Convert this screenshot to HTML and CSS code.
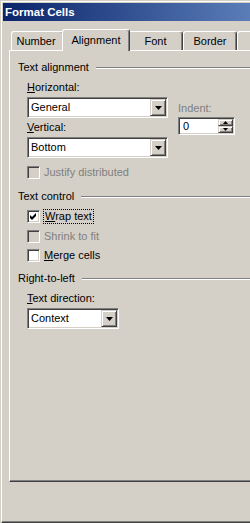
FILE: index.html
```html
<!DOCTYPE html>
<html lang="en">
<head>
    <meta charset="UTF-8">
    <meta name="viewport" content="width=device-width, initial-scale=1.0">
    <title>Format Cells</title>
    <link rel="stylesheet" href="styles.css">
</head>
<body>
<div class="window">
    <div class="caption">Format Cells</div>

    <div class="tabs">
        <div class="tab tab-number">Number</div>
        <div class="tab tab-alignment active">Alignment</div>
        <div class="tab tab-font">Font</div>
        <div class="tab tab-border">Border</div>
        <div class="tab tab-more"></div>
    </div>

    <div class="panel">
        <div class="group">
            <div class="group-title"><span>Text alignment</span><i class="rule"></i></div>
            <div class="group-body">
                <div class="align-row">
                    <div class="align-col">
                        <div class="label"><u>H</u>orizontal:</div>
                        <div class="combo combo-wide">
                            <span class="combo-text">General</span>
                            <span class="drop"><svg width="7" height="4" viewBox="0 0 7 4"><path d="M0 0h7L3.5 4z"/></svg></span>
                        </div>
                        <div class="label"><u>V</u>ertical:</div>
                        <div class="combo combo-wide">
                            <span class="combo-text">Bottom</span>
                            <span class="drop"><svg width="7" height="4" viewBox="0 0 7 4"><path d="M0 0h7L3.5 4z"/></svg></span>
                        </div>
                    </div>
                    <div class="indent-col">
                        <div class="label disabled">Indent:</div>
                        <div class="spinner">
                            <span class="spin-text">0</span>
                            <span class="spin-buttons">
                                <span class="spin-btn"><svg width="5" height="3" viewBox="0 0 5 3"><path d="M2.5 0L5 3H0z"/></svg></span>
                                <span class="spin-btn"><svg width="5" height="3" viewBox="0 0 5 3"><path d="M0 0h5L2.5 3z"/></svg></span>
                            </span>
                        </div>
                    </div>
                </div>
                <div class="check-row justify-row disabled">
                    <span class="checkbox"></span>
                    <span class="check-label">Justify distributed</span>
                </div>
            </div>
        </div>

        <div class="group group-control">
            <div class="group-title"><span>Text control</span><i class="rule"></i></div>
            <div class="group-body">
                <div class="check-row wrap-row">
                    <span class="checkbox checked"><svg width="7" height="7" viewBox="0 0 7 7"><path d="M0 2L2 4L6 0V3L2 7L0 5Z"/></svg></span>
                    <span class="check-label focus"><u>W</u>rap text</span>
                </div>
                <div class="check-row shrink-row disabled">
                    <span class="checkbox"></span>
                    <span class="check-label">Shrink to fit</span>
                </div>
                <div class="check-row merge-row">
                    <span class="checkbox"></span>
                    <span class="check-label"><u>M</u>erge cells</span>
                </div>
            </div>
        </div>

        <div class="group group-rtl">
            <div class="group-title"><span>Right-to-left</span><i class="rule"></i></div>
            <div class="group-body">
                <div class="label label-direction"><u>T</u>ext direction:</div>
                <div class="combo combo-small">
                    <span class="combo-text">Context</span>
                    <span class="drop"><svg width="7" height="4" viewBox="0 0 7 4"><path d="M0 0h7L3.5 4z"/></svg></span>
                </div>
            </div>
        </div>
    </div>
</div>
</body>
</html>
```

FILE: styles.css
```css
html, body {
    margin: 0;
    overflow: hidden;
}

body {
    width: 250px;
    height: 523px;
    background-color: #d4d0c8;
    font-family: "Liberation Sans", Arial, sans-serif;
    font-size: 11px;
    color: #000;
}

/* the dialog runs on past the right edge, so it has no right border here */
.window {
    box-sizing: border-box;
    width: 249px;
    height: 522px;
    margin: 1px 0 0 1px;
    padding: 1px 0 1px 1px;
    border-left: 1px solid #fff;
    border-top: 1px solid #fff;
    border-bottom: 1px solid #404040;
    box-shadow: inset 0 -1px #808080;
}

.caption {
    height: 18px;
    line-height: 18px;
    padding-left: 2px;
    background: linear-gradient(to right, #0a246a, #5a7db8);
    color: #fff;
    font-weight: bold;
    font-size: 11.5px;
}

/* tab strip */
.tabs {
    position: relative;
    z-index: 2;
    display: flex;
    align-items: flex-end;
    height: 22px;
    margin: 8px 0 -1px 8px;
}

.tab {
    box-sizing: border-box;
    position: relative;
    flex-shrink: 0;
    height: 19px;
    margin-bottom: 1px;
    line-height: 18px;
    text-align: center;
    background-color: #d4d0c8;
    border-top: 1px solid #fff;
    border-left: 1px solid #fff;
    border-right: 1px solid #404040;
    border-radius: 3px 3px 0 0;
    box-shadow: inset -1px 0 #808080;
}

.tab-number { width: 53px; padding-right: 3px; }
.tab-font { width: 55px; }
.tab-border { width: 54px; }

.tab-more {
    flex: 1;
    flex-shrink: 1;
    border-right: none;
    border-top-right-radius: 0;
    box-shadow: none;
}

.tab.active {
    z-index: 3;
    width: 68px;
    height: 22px;
    margin: 0 -2px;
    line-height: 20px;
}

/* page */
.panel {
    box-sizing: border-box;
    position: relative;
    z-index: 1;
    height: 432px;
    margin-left: 6px;
    padding-top: 10px;
    border-top: 1px solid #fff;
    border-left: 1px solid #fff;
    border-bottom: 1px solid #404040;
    box-shadow: inset 0 -1px #808080;
}

.group {
    padding-left: 8px;
}

.group-control {
    margin-top: 11px;
}

.group-rtl {
    margin-top: 10px;
}

.group-title {
    display: flex;
    align-items: center;
    height: 13px;
    line-height: 13px;
    white-space: nowrap;
}

.rule {
    flex: 1;
    height: 0;
    margin-left: 7px;
    border-top: 1px solid #808080;
    border-bottom: 1px solid #fff;
}

.group-body {
    padding-left: 9px;
}

.label {
    height: 13px;
    line-height: 13px;
    white-space: nowrap;
}

.disabled,
.label.disabled {
    color: #808080;
}

.align-row {
    display: flex;
    margin-top: 7px;
}

.align-col {
    width: 141px;
}

.align-col .combo {
    margin: 3px 0;
}

.indent-col {
    margin-left: 10px;
    padding-top: 21px;
}

/* sunken field */
.combo,
.spinner,
.checkbox {
    box-sizing: border-box;
    background-color: #fff;
    border-top: 1px solid #808080;
    border-left: 1px solid #808080;
    border-right: 1px solid #fff;
    border-bottom: 1px solid #fff;
    box-shadow: inset 1px 1px #404040, inset -1px -1px #d4d0c8;
}

.combo {
    display: flex;
    height: 21px;
    padding: 1px;
}

.combo-wide { width: 141px; }

.combo-small {
    width: 92px;
    margin-top: 3px;
}

.combo-text {
    flex: 1;
    padding-left: 2px;
    line-height: 17px;
    white-space: nowrap;
}

.drop,
.spin-btn {
    box-sizing: border-box;
    display: flex;
    justify-content: center;
    align-items: center;
    background-color: #d4d0c8;
    border-top: 1px solid #d4d0c8;
    border-left: 1px solid #d4d0c8;
    border-right: 1px solid #404040;
    border-bottom: 1px solid #404040;
    box-shadow: inset 1px 1px #fff, inset -1px -1px #808080;
}

.drop {
    width: 16px;
    height: 17px;
}

.spinner {
    display: flex;
    width: 57px;
    height: 18px;
    margin-top: 2px;
    padding: 1px;
}

.spin-text {
    flex: 1;
    padding-left: 3px;
    line-height: 14px;
}

.spin-buttons {
    display: flex;
    flex-direction: column;
    width: 15px;
}

.spin-btn {
    height: 7px;
}

/* check boxes */
.check-row {
    display: flex;
    align-items: center;
    height: 13px;
    white-space: nowrap;
}

.justify-row { margin-top: 5px; }
.wrap-row { margin-top: 7px; }
.shrink-row { margin-top: 7px; }
.merge-row { margin-top: 6px; }

.checkbox {
    display: flex;
    justify-content: center;
    align-items: center;
    width: 13px;
    height: 13px;
    margin-right: 4px;
}

.disabled .checkbox {
    background-color: #d4d0c8;
}

.check-label {
    line-height: 13px;
}

.check-label.focus {
    margin: -1px 0 -1px -1px;
    padding: 0 1px;
    border: 1px dotted #000;
}

.label-direction {
    margin-top: 7px;
}
```
